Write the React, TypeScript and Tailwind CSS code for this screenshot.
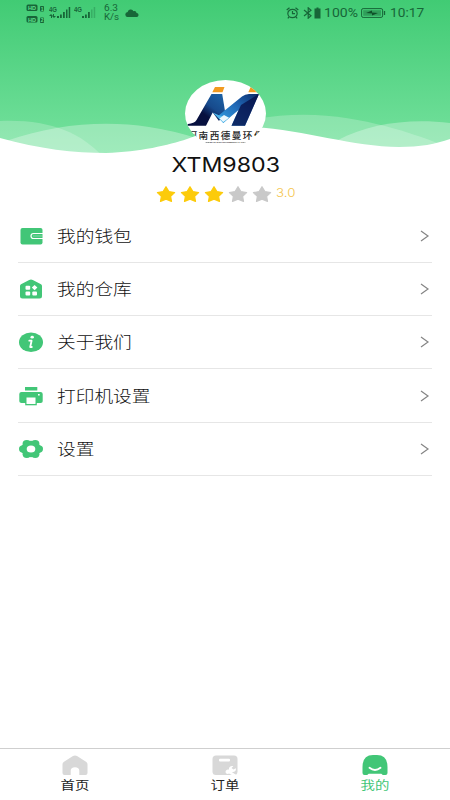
import type { ReactNode } from "react";

const GREEN = "#42c677";

function HeaderWaves() {
  return (
    <svg className="absolute inset-0" width="450" height="160" viewBox="0 0 450 160">
      <defs>
        <linearGradient id="sky" x1="0" y1="0" x2="0" y2="1">
          <stop offset="0" stopColor="#41cb74" />
          <stop offset="1" stopColor="#79e3a1" />
        </linearGradient>
      </defs>
      <rect width="450" height="160" fill="url(#sky)" />
      <g fill="#fff">
        <path opacity=".22" d="M0 121C48 119 80 132 102 156V160H0Z" />
        <path opacity=".3" d="M6 141C54 124 105 120 149 127Q175 131 196 138V160H6Z" />
        <path opacity=".22" d="M250 120C305 109 350 117 385 126C407 132 422 137 440 144V160H250Z" />
        <path opacity=".3" d="M338 140C370 123 411 118 450 123V160H338Z" />
        <path d="M0 138C39 149 75 153 106 153C140 152 169 145 187 139C213 129 232 126 253 127C305 130 353 147 399 147C420 147 436 144 450 139V160H0Z" />
      </g>
    </svg>
  );
}

function Signal({ weak = false }: { weak?: boolean }) {
  return (
    <svg width="22" height="14" viewBox="0 0 22 14" fill="#176638">
      <text x="0" y="6" fontSize="6.500" fontWeight="700" textLength="8" lengthAdjust="spacingAndGlyphs" fontFamily="Liberation Sans, sans-serif">4G</text>
      {!weak && <path d="M2 8l2 2H3v2H2v-2H0zM5 12l-2-2h1V8h1v2h2z" />}
      <path d="M8 10h2v2H8zM11 8.500h1.800V12H11zM14 6h1.800v6H14z" />
      <path opacity={weak ? 0.3 : 1} d="M17 3.500h1.500V12H17zM19.700 1h1.500v11h-1.500z" />
    </svg>
  );
}

function StatusBar() {
  return (
    <div className="relative flex h-[26px] items-center font-['Roboto','Noto_Sans',sans-serif] text-[#176638]">
      <svg className="ml-[26px] mt-px shrink-0" width="20" height="20" viewBox="0 0 20 20">
        {[0, 11.5].map((y) => (
          <g key={y} transform={`translate(0 ${y})`}>
            <rect x=".5" y=".5" width="11" height="6.500" rx="1.500" fill="#176638" />
            <text x="2" y="6" fontSize="6" fontWeight="700" fill="#5fe08e" textLength="8" lengthAdjust="spacingAndGlyphs" fontFamily="Liberation Sans, sans-serif">HD</text>
            <rect x="14" y="2" width="4" height="5.500" rx=".8" fill="#176638" />
            <text x="14.800" y="6.600" fontSize="5" fontWeight="700" fill="#5fe08e" fontFamily="Liberation Sans, sans-serif">{y ? "2" : "1"}</text>
          </g>
        ))}
      </svg>
      <div className="ml-[3px] shrink-0"><Signal /></div>
      <div className="ml-[3px] shrink-0"><Signal weak /></div>
      <div className="ml-[8px] w-[14px] shrink-0 text-[9px] leading-[9px]">
        <span className="block w-fit origin-left scale-x-[1.12]">6.3</span>
        <span className="block w-fit origin-left scale-x-[1.08]">K/s</span>
      </div>
      <svg className="ml-[7px] shrink-0" width="14" height="8" viewBox="0 0 14 8" fill="#176638">
        <path d="M3 8a2.500 2.500 0 0 1-.3-5C3 1 4.500.2 6 .5c1 .1 2 .8 2.300 1.700C10 1.500 11.500 2.500 11.500 4 13 4 13.600 5 13.500 6.200 13.300 7.400 12.500 8 11.500 8z" />
      </svg>
      <svg className="ml-[147px] shrink-0" width="13" height="12" viewBox="0 0 13 12" fill="none" stroke="#176638" strokeWidth="1.200">
        <ellipse cx="6.500" cy="6.500" rx="4.700" ry="4.200" />
        <path d="M6.500 4v2.700H9M.7 3L3.500.7M12.300 3L9.500.7M3 10l-1.200 1.300M10 10l1.200 1.300" />
      </svg>
      <svg className="ml-[4px] shrink-0" width="18" height="12" viewBox="0 0 18 12">
        <path d="M1 3l7 5.800-2.800 2.400V.8L8 3.200 1 9" fill="none" stroke="#176638" strokeWidth="1.200" />
        <path d="M11.500 1.500h2V.5h2v1h2v10h-6z" fill="#176638" />
      </svg>
      <span className="ml-[3px] w-[34px] shrink-0 text-[12px]"><span className="block w-fit origin-left scale-x-[1.17]">100%</span></span>
      <svg className="ml-[3px] shrink-0" width="25" height="10" viewBox="0 0 25 10">
        <rect x=".6" y=".6" width="21" height="8.800" rx="1.500" fill="none" stroke="#176638" />
        <rect x="2.200" y="2.200" width="17.800" height="5.600" fill="#176638" opacity=".45" />
        <path d="M5 5l6-2.500v2l6 .5-6 2.500v-2z" fill="#0f5029" />
        <path d="M23.500 3v4" stroke="#176638" strokeWidth="1.300" />
      </svg>
      <span className="ml-[4px] shrink-0 text-[12px]"><span className="block w-fit origin-left scale-x-[1.14]">10:17</span></span>
    </div>
  );
}

function Avatar() {
  return (
    <svg className="relative mx-auto mt-[54px] block" width="82" height="67" viewBox="0 0 82 67">
      <defs>
        <clipPath id="face"><ellipse cx="41.500" cy="33.500" rx="40.500" ry="33.500" /></clipPath>
        <linearGradient id="legA" x1="1" y1="0" x2=".1" y2="1">
          <stop offset="0" stopColor="#1e65a8" /><stop offset=".4" stopColor="#174a8c" /><stop offset=".62" stopColor="#07103f" />
        </linearGradient>
        <linearGradient id="legB" x1="1" y1="0" x2="0" y2="1">
          <stop offset="0" stopColor="#0b2b68" /><stop offset=".45" stopColor="#2067b5" /><stop offset="1" stopColor="#35a8e8" />
        </linearGradient>
      </defs>
      <g clipPath="url(#face)">
        <rect width="83" height="67" fill="#fff" />
        <path d="M31 7h9.500l-2 5.300H28.300zM66.700 7H80v5.300H64.300z" fill="#f29a20" />
        <path d="M27.500 14h10.700L41 31l-6 10-6.300-8.500L22 45.700H2.500L4 44c4-.3 7-1.500 8.500-4z" fill="url(#legA)" />
        <path d="M75 14L61 45.700H47.500L54.500 30 39.300 43 34 36l6.700-5.500L58 16.500Q61 14 65 14z" fill="url(#legB)" />
        <path d="M75 14L61 45.700H47.500L57 25z" fill="#07114a" opacity=".8" />
        <path d="M28.700 32.500L39.300 43l5.700-5.500-9.500-2z" fill="#4db4e9" />
        <path d="M40 35l5 2.800-5.700 4.200-3.800-3.500z" fill="#eaf7fd" />
        <text x="3.500" y="58.800" fontSize="9.600" fontWeight="500" fill="#242424" textLength="76" fontFamily="Noto Sans CJK SC, sans-serif">河南西德曼环保</text>
        <text x="19.300" y="62.900" fontSize="2.400" fontWeight="700" fill="#444" textLength="45" lengthAdjust="spacingAndGlyphs" fontFamily="Liberation Sans, sans-serif">XIDEMAN ENVIRONMENTAL PROT</text>
      </g>
    </svg>
  );
}

function Star({ filled }: { filled: boolean }) {
  return (
    <svg width="20" height="18" viewBox="0 0 20 18">
      <path d="M10 1.700l2.900 4.900 5.700 1-4 3.800.9 5-5.500-2.300-5.500 2.300.9-5-4-3.800 5.700-1z" fill={filled ? "#fccb0b" : "#c9c9c9"} stroke={filled ? "#fccb0b" : "#c9c9c9"} strokeWidth="1.200" strokeLinejoin="round" />
    </svg>
  );
}

function IconBox({ children }: { children: ReactNode }) {
  return <svg className="shrink-0" width="26" height="22" viewBox="0 0 26 22" fill={GREEN}>{children}</svg>;
}

const WalletIcon = (
  <IconBox>
    <rect x="2.500" y="3" width="22" height="16.500" rx="2" />
    <path d="M25 8.500H15.500a2.500 2.500 0 0 0 0 5H25" fill="none" stroke="#fff" strokeWidth="1.200" />
    <path d="M15 11h9.500" stroke="#fff" strokeWidth="1" opacity=".35" />
  </IconBox>
);
const WarehouseIcon = (
  <IconBox>
    <path d="M11.200 2q1.800-1 3.600 0l8.200 4.300q1 .6 1 1.700v10q0 2.500-2.500 2.500h-17Q2 20.500 2 18V8q0-1.100 1-1.700z" />
    <g fill="#fff"><rect x="7.500" y="7.700" width="4.700" height="4" rx="1" /><rect x="7.500" y="13.500" width="4.700" height="4" rx="1" /><rect x="14.300" y="13.500" width="4.700" height="4" rx="1" /><path d="M16.600 6.900l2.800 2.700-2.800 2.700-2.800-2.700z" /></g>
  </IconBox>
);
const InfoIcon = (
  <IconBox>
    <ellipse cx="13" cy="11.200" rx="12" ry="9.800" />
    <ellipse cx="14.200" cy="6.200" rx="1.700" ry="1.400" fill="#fff" />
    <path d="M11.300 9.700h2.300L12.200 16h1.600" fill="none" stroke="#fff" strokeWidth="1.800" strokeLinejoin="round" strokeLinecap="round" />
  </IconBox>
);
const PrinterIcon = (
  <IconBox>
    <path d="M7 2h12.300v3.500H7zM3.500 7h19q2.200 0 2.200 2v7.200q0 1.800-2 1.800H3.500q-2.200 0-2.200-1.800V9q0-2 2.200-2z" />
    <path d="M7.200 11.500h11.600v8.800H7.200z" />
    <path d="M8.500 12.500h9v6.500h-9zM20 9h1.700v1.500H20z" fill="#fff" />
  </IconBox>
);
const GearIcon = (
  <IconBox>
    <ellipse cx="13" cy="11" rx="10" ry="8.200" />
    <ellipse cx="5.200" cy="11" rx="4.200" ry="3.700" />
    <ellipse cx="20.800" cy="11" rx="4.200" ry="3.700" />
    <ellipse cx="8.800" cy="5.700" rx="4.200" ry="3.700" />
    <ellipse cx="17.200" cy="5.700" rx="4.200" ry="3.700" />
    <ellipse cx="8.800" cy="16.300" rx="4.200" ry="3.700" />
    <ellipse cx="17.200" cy="16.300" rx="4.200" ry="3.700" />
    <ellipse cx="13" cy="11" rx="4.300" ry="3.600" fill="#fff" />
  </IconBox>
);

const MENU = [
  { label: "我的钱包", icon: WalletIcon },
  { label: "我的仓库", icon: WarehouseIcon },
  { label: "关于我们", icon: InfoIcon },
  { label: "打印机设置", icon: PrinterIcon },
  { label: "设置", icon: GearIcon },
];

const TABS = [
  {
    label: "首页",
    active: false,
    icon: <path d="M11 1q2-1.100 4 0l9 5.700q1.500 1 1.500 2.600V18q0 2-2 2h-6.200v-4.300q0-3.500-4.300-3.500t-4.300 3.500V20H2.500q-2 0-2-2V9.300Q.5 7.700 2 6.700z" />,
  },
  {
    label: "订单",
    active: false,
    icon: (
      <>
        <rect x=".5" y=".5" width="25" height="19.500" rx="3.500" />
        <rect x="7" y="3.800" width="11" height="2.800" rx="1" fill="#fff" />
        <path d="M13.500 17c0-2 1.700-2.500 3.500-2.500-.5-2.500 2-4 4.300-3.300L19.500 13l2 1.500 2.300-1.300c.8 2.500-1.500 4-4 3.700l4.500 3h-4.500L17 18.500c-1 .8-3.200.5-3.500-1.500z" fill="#fff" />
      </>
    ),
  },
  {
    label: "我的",
    active: true,
    icon: (
      <>
        <path d="M.5 12Q.5 0 11 0h4q10.500 0 10.500 12v6q0 2-2 2h-2.700l-1.500-1.300H6.700L5.200 20H2.500q-2 0-2-2z" />
        <path d="M7.500 12.800q5.500 4.500 11 0" fill="none" stroke="#fff" strokeWidth="1.900" strokeLinecap="round" />
      </>
    ),
  },
];

export default function App() {
  return (
    <div className="flex h-[800px] w-[450px] flex-col overflow-hidden bg-white font-['Noto_Sans_CJK_SC',sans-serif]">
      <header className="relative h-[208px] shrink-0">
        <HeaderWaves />
        <StatusBar />
        <Avatar />
        <h1 className="relative mt-[4px] flex h-[28px] items-center justify-center pl-[2px] font-['Inter',sans-serif] text-[20px] text-[#111]">
          <span className="block scale-x-[1.16]">XTM9803</span>
        </h1>
        <div className="relative mt-[6px] flex h-[18px] items-center pl-[155.500px]">
          <div className="flex gap-[4px]">
            {[1, 2, 3, 4, 5].map((n) => <Star key={n} filled={n <= 3} />)}
          </div>
          <span className="ml-[4px] block origin-left scale-x-[1.16] font-['Inter',sans-serif] text-[11.500px] font-light text-[#f5c64f]">3.0</span>
        </div>
      </header>
      <main className="grow px-[18px] pt-[1.500px]">
        {MENU.map((item) => (
          <button key={item.label} className="flex h-[53.300px] w-full items-center border-b border-[#e6e6e6] text-left">
            {item.icon}
            <span className="mb-[2px] ml-[13px] block origin-left scale-x-[1.215] text-[15.400px] font-light leading-[22px] text-[#111]">{item.label}</span>
            <svg className="ml-auto mr-[2px]" width="11" height="12" viewBox="0 0 11 12" fill="none" stroke="#858585" strokeWidth="1.200">
              <path d="M2 1l7 5-7 5" />
            </svg>
          </button>
        ))}
      </main>
      <nav className="flex h-[52px] shrink-0 border-t border-[#cfcfcf]">
        {TABS.map((tab) => (
          <button key={tab.label} className="flex flex-1 flex-col items-center pt-[6px]">
            <svg width="26" height="20" viewBox="0 0 26 20" fill={tab.active ? GREEN : "#d8d8d8"}>{tab.icon}</svg>
            <span className={`mt-[1px] block scale-x-[1.2] text-[12px] leading-[18px] ${tab.active ? "text-[#42c677]" : "text-[#222]"}`}>{tab.label}</span>
          </button>
        ))}
      </nav>
    </div>
  );
}
